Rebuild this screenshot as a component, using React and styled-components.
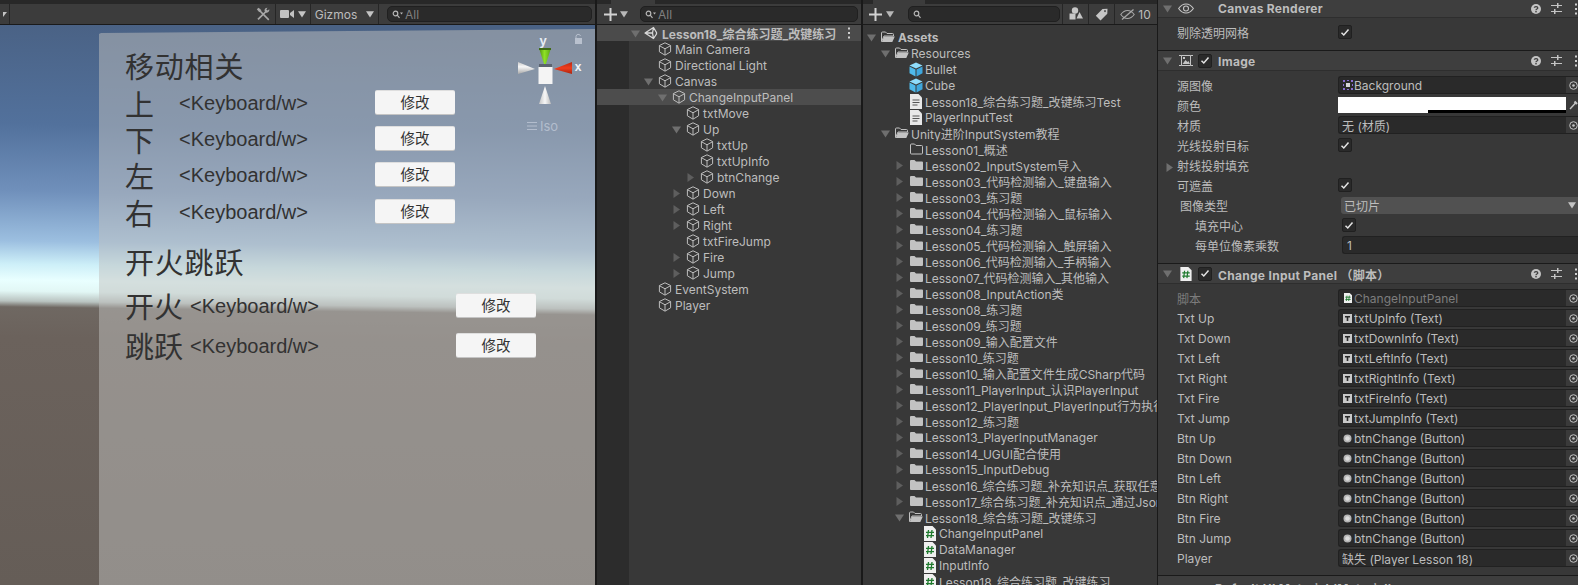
import React from 'react';
import styled, { createGlobalStyle } from 'styled-components';

const UI_FONT = `Inter, "Noto Sans CJK SC", sans-serif`;
const LINE = '#1a1a1a';
const TEXT = '#bdbdbd';

const GlobalStyle = createGlobalStyle`
	html, body {
		margin: 0;
		width: 1578px;
		height: 585px;
		overflow: hidden;
		background: #191919;
	}
`;

const Editor = styled.div`
	display: flex;
	width: 1578px;
	height: 585px;
	overflow: hidden;
	font-family: ${UI_FONT};
	font-size: 12px;
	color: ${TEXT};
	background: #191919;
`;
const Column = styled.div`
	flex: ${p => p.$flex || 'none'};
	width: ${p => p.$width}px;
	margin-left: ${p => p.$gap || 0}px;
	display: flex;
	flex-direction: column;
	overflow: hidden;
	background: #383838;
`;
const TabStrip = styled.div`
	height: 4px;
	flex: none;
	background: #282828;
	display: flex;
	padding-left: ${p => p.$tabLeft || 0}px;
`;
const ActiveTab = styled.div`
	width: ${p => p.$width}px;
	height: 4px;
	background: #3c3c3c;
`;
const Toolbar = styled.div`
	height: 20px;
	flex: none;
	display: flex;
	align-items: center;
	background: #3c3c3c;
	border-bottom: 1px solid ${LINE};
	box-sizing: content-box;
`;
const ToolCell = styled.div`
	width: ${p => p.$width}px;
	height: 100%;
	flex: none;
	display: flex;
	align-items: center;
	justify-content: center;
	gap: ${p => p.$gap || 0}px;
	border-right: ${p => (p.$plain ? 'none' : `1px solid #262626`)};
	box-sizing: border-box;
`;
const ToolSpacer = styled.div`
	flex: 1;
	height: 100%;
`;
const SearchBox = styled.div`
	height: 16px;
	width: ${p => p.$width}px;
	margin-left: ${p => p.$left}px;
	flex: none;
	display: flex;
	align-items: center;
	gap: 2px;
	padding-left: 4px;
	box-sizing: border-box;
	background: #2a2a2a;
	border: 1px solid #202020;
	border-radius: 5px;
	color: #808080;
`;

/* scene view */
const SceneView = styled.div`
	position: relative;
	flex: 1;
	display: flex;
	flex-direction: column;
	overflow: hidden;
	background: linear-gradient(180.8deg,
		#4a6285 7px, #52719c 107px, #7090bb 174px, #9cbfe0 224px, #cdeff8 247px,
		#e9ffff 263px, #e2f7f5 274px, #b9c3c0 284px, #6f6862 290px, #6b625c 320px, #655d57 100%);
`;
const UiPanel = styled.div`
	flex: 1;
	margin: 4px 0 0 99px;
	padding: 17px 0 0 26px;
	color: #323232;
	font-family: "Liberation Sans", "Noto Sans CJK SC", sans-serif;
	background: rgba(192, 192, 190, 0.5);
	clip-path: polygon(0 5px, 2px 4px, 100% 0, 100% 100%, 0 100%);
`;
const PanelTitle = styled.div`
	height: 38px;
	line-height: 38px;
	font-size: 29px;
	letter-spacing: 0.8px;
	margin-top: ${p => p.$top || 0}px;
	margin-bottom: ${p => p.$bottom || 0}px;
	font-family: "Noto Sans CJK SC", sans-serif;
`;
const BindRow = styled.div`
	display: grid;
	grid-template-columns: ${p => p.$label}px ${p => p.$key}px 80px;
	align-items: center;
	height: ${p => p.$height}px;
	margin-top: ${p => p.$top || 0}px;
`;
const BindLabel = styled.div`
	font-size: 29px;
	line-height: 1;
	font-family: "Noto Sans CJK SC", sans-serif;
	white-space: nowrap;
`;
const BindKey = styled.div`
	font-size: 20px;
	line-height: 1.15;
	margin-bottom: ${p => p.$lift}px;
	white-space: nowrap;
`;
const ChangeButton = styled.div`
	height: 23px;
	margin-bottom: ${p => p.$lift}px;
	display: flex;
	align-items: center;
	justify-content: center;
	font-size: 14.5px;
	line-height: 1;
	font-family: "Noto Sans CJK SC", sans-serif;
	color: #323232;
	background: #f5f5f5;
	border-radius: 2px;
	box-shadow: 0 1px 0 #c4c4c4, 0 -1px 0 #dedede;
`;
const GizmoLayer = styled.svg`
	position: absolute;
	left: 515px;
	top: 4px;
`;
const IsoLabel = styled.div`
	position: absolute;
	left: 527px;
	top: 93px;
	display: flex;
	align-items: center;
	gap: 3px;
	font-size: 13px;
	line-height: 16px;
	color: #b3bdcd;
`;

/* trees */
const TreeArea = styled.div`
	flex: 1;
	overflow: hidden;
	background: ${p => (p.$rail ? `linear-gradient(to right, #2c2c2c 32px, #383838 32px)` : '#383838')};
	padding-top: ${p => p.$top || 0}px;
`;
const TreeRow = styled.div`
	height: 16px;
	display: flex;
	align-items: center;
	padding-left: ${p => p.$indent}px;
	white-space: nowrap;
	overflow: hidden;
	background: ${p => (p.$selected ? '#4d4d4d' : 'transparent')};
	font-weight: ${p => (p.$bold ? 700 : 400)};
`;
const ArrowSlot = styled.div`
	width: 14px;
	flex: none;
	display: flex;
`;
const IconSlot = styled.div`
	width: ${p => p.$width || 14}px;
	height: 14px;
	flex: none;
	display: flex;
	align-items: center;
	justify-content: center;
	margin-left: ${p => p.$left || 0}px;
	margin-right: ${p => p.$gap ?? 3}px;
`;
const SceneHeader = styled.div`
	height: 16px;
	flex: none;
	display: flex;
	align-items: center;
	padding-left: 34px;
	background: #4b4b4b;
	font-weight: 700;
	white-space: nowrap;
`;
const HeaderDots = styled.div`
	margin-left: auto;
	padding-right: 10px;
	display: flex;
`;

/* inspector */
const CompHeader = styled.div`
	height: ${p => p.$height || 19}px;
	flex: none;
	display: flex;
	align-items: center;
	padding-left: 5px;
	background: #3e3e3e;
	border-top: ${p => (p.$first ? 'none' : `1px solid ${LINE}`)};
	border-bottom: 1px solid #2e2e2e;
	font-weight: 700;
	white-space: nowrap;
	box-sizing: content-box;
`;
const CompTitle = styled.span`
	margin-left: ${p => p.$left}px;
	margin-top: ${p => (p.$drop ? 2 : 0)}px;
	letter-spacing: 0.3px;
`;
const CompActions = styled.div`
	margin-left: auto;
	display: flex;
	align-items: center;
`;
const ActionSlot = styled.div`
	width: ${p => p.$width || 20}px;
	display: flex;
	justify-content: ${p => (p.$end ? 'flex-end' : 'center')};
`;
const CompBody = styled.div`
	padding: 4px 0 ${p => p.$bottom}px 0;
	flex: none;
`;
const PropRow = styled.div`
	position: relative;
	height: 20px;
	display: flex;
	align-items: center;
	padding-left: ${p => p.$indent || 19}px;
	white-space: nowrap;
	color: ${p => (p.$dim ? '#7d7d7d' : TEXT)};
`;
const PropLabel = styled.div`
	width: ${p => p.$width || 161}px;
	flex: none;
`;
const FoldArrow = styled.div`
	position: absolute;
	left: 7px;
	top: 5px;
`;
const Field = styled.div`
	flex: 1;
	height: 18px;
	display: flex;
	align-items: center;
	box-sizing: border-box;
	padding-left: 3px;
	background: #2a2a2a;
	border: 1px solid #212121;
	border-right: none;
	border-radius: 3px 0 0 3px;
	overflow: hidden;
	color: ${p => (p.$dim ? '#7d7d7d' : TEXT)};
`;
const FieldIcon = styled.div`
	width: 11px;
	height: 11px;
	flex: none;
	margin-right: 1px;
	display: flex;
	align-items: center;
	justify-content: center;
`;
const FieldText = styled.span`
	flex: 1;
	overflow: hidden;
`;
const PickButton = styled.div`
	width: 12px;
	height: 16px;
	flex: none;
	display: flex;
	align-items: center;
	padding-left: 3px;
	box-sizing: border-box;
	background: #3a3a3a;
`;
const ColorBar = styled.div`
	flex: 1;
	height: 16px;
	display: flex;
	align-items: flex-end;
	padding-left: 90px;
	background: #fff;
`;
const ColorAlpha = styled.div`
	flex: 1;
	height: 3px;
	background: #000;
`;
const CheckBox = styled.div`
	width: 14px;
	height: 14px;
	flex: none;
	display: flex;
	align-items: center;
	justify-content: center;
	box-sizing: border-box;
	background: #2a2a2a;
	border: 1px solid #202020;
	border-radius: 2px;
	margin-left: ${p => p.$left || 0}px;
`;
const DropDown = styled.div`
	flex: 1;
	height: 17px;
	display: flex;
	align-items: center;
	justify-content: space-between;
	padding: 0 2px 0 3px;
	background: #515151;
	border-radius: 3px 0 0 3px;
`;
const NumberField = styled.div`
	flex: 1;
	height: 18px;
	display: flex;
	align-items: center;
	padding-left: 4px;
	box-sizing: border-box;
	background: #2a2a2a;
	border: 1px solid #212121;
	border-right: none;
	border-radius: 3px 0 0 3px;
`;

/* icons */
const Down = ({ size = 9, color = '#6f6f6f' }) => (
	<svg width={size} height={size} viewBox="0 0 9 9"><path d="M0 1.5h9L4.5 8.5z" fill={color} /></svg>
);
const Right = ({ color = '#5e5e5e' }) => (
	<svg width="9" height="9" viewBox="0 0 9 9"><path d="M1.5 0v9l6.5-4.500z" fill={color} /></svg>
);
const Cube = () => (
	<svg width="14" height="14" viewBox="0 0 14 14" fill="none" stroke="#bdbdbd" strokeWidth="1" strokeLinejoin="round">
		<path d="M7 .8 12.6 3.500 V9.800 L7 13.200 1.400 9.800 V3.500z M1.400 3.700 7 6.800 12.600 3.700 M7 6.800 V13" />
	</svg>
);
const BlueCube = () => (
	<svg width="14" height="15" viewBox="0 0 14 15">
		<path d="M7 .5 13.500 3.500 7 6.500 .5 3.500z" fill="#8fdcfb" />
		<path d="M.5 4.500 6.500 7.500 V14.500 L.5 11.300z" fill="#4fb9ea" />
		<path d="M13.500 4.500 7.500 7.500 V14.500 L13.500 11.300z" fill="#3ea6dc" />
	</svg>
);
const Folder = () => (
	<svg width="13" height="12" viewBox="0 0 13 12">
		<path d="M0 2a1 1 0 0 1 1-1h3.500l1.500 1.500h6a1 1 0 0 1 1 1V10a1 1 0 0 1-1 1H1a1 1 0 0 1-1-1z" fill="#c2c2c2" />
	</svg>
);
const FolderOpen = () => (
	<svg width="14" height="12" viewBox="0 0 14 12">
		<path d="M.5 2a1 1 0 0 1 1-1h3l1.500 1.500h5.500a1 1 0 0 1 1 1V5H3L.5 10.500z" fill="none" stroke="#c2c2c2" />
		<path d="M3 5.500h10.800L11.300 11H.8z" fill="#c2c2c2" />
	</svg>
);
const FolderEmpty = () => (
	<svg width="13" height="12" viewBox="0 0 13 12">
		<path d="M.5 2a1 1 0 0 1 1-1h3l1.500 1.500h5.500a1 1 0 0 1 1 1V10a1 1 0 0 1-1 1h-10a1 1 0 0 1-1-1z" fill="none" stroke="#c2c2c2" />
	</svg>
);
const DocIcon = () => (
	<svg width="12" height="15" viewBox="0 0 12 15">
		<path d="M0 0h8.500L12 3.500V15H0z" fill="#e8e8e8" />
		<path d="M2.500 6h7M2.500 8.500h7M2.500 11h5" stroke="#555" strokeWidth="1" />
	</svg>
);
const ScriptIcon = ({ width = 12, height = 15 }) => (
	<svg width={width} height={height} viewBox="0 0 12 15">
		<path d="M0 0h8.500L12 3.500V15H0z" fill="#efefef" />
		<path d="M4.500 4 3.500 12M8 4 7 12M2 6.300h8M2 9.700h8" stroke="#1f7a2e" strokeWidth="1.300" />
	</svg>
);
const UnityMark = () => (
	<svg width="14" height="14" viewBox="0 0 14 14" fill="none" stroke="#d8d8d8" strokeWidth="1.300" strokeLinejoin="round">
		<path d="M1 7 9.500 1.500 12.500 6.500 12.500 8 9.500 12.500z M1 7H8.500L9.500 1.500M8.500 7 9.500 12.500" />
	</svg>
);
const VDots = ({ color = '#cfcfcf' }) => (
	<svg width="4" height="12" viewBox="0 0 4 12" fill={color}><rect x="1" y="0.500" width="2" height="2" /><rect x="1" y="5" width="2" height="2" /><rect x="1" y="9.500" width="2" height="2" /></svg>
);
const Lens = ({ arrow = true }) => (
	<svg width="11" height="9" viewBox="0 0 11 9" fill="none" stroke="#b8b8b8" strokeWidth="1.200">
		<circle cx="3.500" cy="3.500" r="2.300" />
		<path d="M5.200 5.200 7.500 7.800" />
		{arrow && <path d="M8 2.500h3L9.500 4.500z" fill="#b8b8b8" stroke="none" />}
	</svg>
);
const Plus = () => (
	<svg width="13" height="13" viewBox="0 0 13 13"><path d="M5.500 0h2v5.500H13v2H7.500V13h-2V7.500H0v-2h5.500z" fill="#d2d2d2" /></svg>
);
const Tools = () => (
	<svg width="14" height="14" viewBox="0 0 14 14" fill="none" stroke="#a8a8a8" strokeWidth="1.700">
		<path d="M3.500 3.500 12.800 12.800" />
		<path d="M10.500 4 2 12.300" />
		<path d="M.8 2.300 2.600.8 5.500 3.300 3.300 5.300z" fill="#a8a8a8" stroke="none" />
		<path d="M13.300 2.200a2.900 2.900 0 0 1-3.900 3.300L8.500 3.700A2.900 2.900 0 0 1 11.500.8L10.300 2.600l1.200 1z" fill="#a8a8a8" stroke="none" />
	</svg>
);
const Camera = () => (
	<svg width="14" height="10" viewBox="0 0 14 10" fill="#c2c2c2"><rect x="0" y="1" width="9" height="8" rx="1" /><path d="M10 4 14 1v8l-4-3z" /></svg>
);
const Shapes = () => (
	<svg width="14" height="14" viewBox="0 0 14 14" fill="#c6c6c6">
		<circle cx="6" cy="3.500" r="3.200" />
		<rect x="0.500" y="6.500" width="6" height="6" />
		<path d="M10.500 5 14 11.500H7.500z" />
	</svg>
);
const Tag = () => (
	<svg width="13" height="13" viewBox="0 0 13 13" fill="#c6c6c6">
		<path d="M7.500 1 12.500 .8 12.300 5.800 5.500 12.500 .8 7.800zM10 2.200a.9.900 0 1 0 .01 0z" fillRule="evenodd" />
	</svg>
);
const EyeOff = () => (
	<svg width="15" height="11" viewBox="0 0 15 11" fill="none" stroke="#a8a8a8" strokeWidth="1.100">
		<path d="M.8 5.500C3 2.500 5 1.500 7.500 1.500S12 2.500 14.200 5.500C12 8.500 10 9.500 7.500 9.500S3 8.500 .8 5.500z" />
		<path d="M2 10.500 13.500.5" strokeWidth="1.300" />
	</svg>
);
const Eye = () => (
	<svg width="16" height="11" viewBox="0 0 16 11" fill="none" stroke="#c4c4c4" strokeWidth="1.100">
		<path d="M.6 5.500C3 2 5.300 1 8 1s5 1 7.400 4.500C13 9 10.700 10 8 10S3 9 .6 5.500z" />
		<circle cx="8" cy="5.500" r="2.500" />
	</svg>
);
const ImageGlyph = () => (
	<svg width="14" height="13" viewBox="0 0 14 13" fill="none" stroke="#c4c4c4">
		<path d="M2.500 1.500h9v10h-9zM0 1.500h2.500M11.500 1.500H14M0 11.500h2.500M11.500 11.500H14" />
		<path d="M3.500 10 6.500 6l2 2 1-1 1.500 3z" fill="#c4c4c4" stroke="none" />
		<rect x="4" y="3" width="2" height="2" fill="#c4c4c4" stroke="none" />
	</svg>
);
const Help = () => (
	<svg width="10" height="10" viewBox="0 0 10 10">
		<circle cx="5" cy="5" r="5" fill="#c4c4c4" />
		<path d="M3.300 3.800C3.400 2.300 6.800 2.300 6.800 4C6.800 5 5 5 5 6.200" fill="none" stroke="#3e3e3e" strokeWidth="1.300" />
		<rect x="4.300" y="7" width="1.400" height="1.400" fill="#3e3e3e" />
	</svg>
);
const Sliders = () => (
	<svg width="11" height="11" viewBox="0 0 11 11" fill="#c4c4c4">
		<rect y="2" width="11" height="1" /><rect x="6" y="0" width="1.500" height="5" />
		<rect y="8" width="11" height="1" /><rect x="3" y="6" width="1.500" height="5" />
	</svg>
);
const Check = () => (
	<svg width="10" height="9" viewBox="0 0 10 9" fill="none" stroke="#e4e4e4" strokeWidth="1.500"><path d="M1.500 4.800 3.800 7 8.500 1.500" /></svg>
);
const Target = () => (
	<svg width="9" height="9" viewBox="0 0 9 9" fill="none" stroke="#c4c4c4"><circle cx="4.500" cy="4.500" r="3.800" /><circle cx="4.500" cy="4.500" r="1.300" fill="#c4c4c4" stroke="none" /></svg>
);
const Dropper = () => (
	<svg width="9" height="10" viewBox="0 0 9 10" fill="none" stroke="#c4c4c4" strokeWidth="1.400"><path d="M1 9 6.500 3" /><path d="M5.500 1.500 8 4" strokeWidth="2.200" /></svg>
);
const SpriteDots = () => (
	<svg width="10" height="10" viewBox="0 0 10 10">
		<path d="M0 0h2v2H0zM4 0h2v1H4zM8 0h2v2H8zM0 4h1v2H0zM9 4h1v2H9zM0 8h2v2H0zM4 9h2v1H4zM8 8h2v2H8z" fill="#8a6fd0" />
		<rect x="3" y="3" width="4" height="4" fill="#d5d5d5" />
	</svg>
);
const TextGlyph = () => (
	<svg width="9" height="9" viewBox="0 0 9 9"><path d="M0 0h9v9H0z M2 2v1.500h1.700V7h1.600V3.500H7V2z" fill="#c8c8c8" fillRule="evenodd" /></svg>
);
const ButtonGlyph = () => (
	<svg width="9" height="9" viewBox="0 0 9 9"><circle cx="4.500" cy="4.500" r="4" fill="#b4b4b4" /><circle cx="4.500" cy="4.500" r="2.300" fill="#dcdcdc" /></svg>
);

const Gizmo = () => (
	<GizmoLayer width="75" height="80" viewBox="0 0 75 80">
		<defs>
			<linearGradient id="coneLeft" x1="0" y1="0" x2="0" y2="1"><stop offset="0" stopColor="#c9c9c9" /><stop offset="0.4" stopColor="#f7f7f7" /><stop offset="1" stopColor="#a8a8a8" /></linearGradient>
			<linearGradient id="coneDown" x1="0" y1="0" x2="1" y2="0"><stop offset="0" stopColor="#c4c4c4" /><stop offset="0.5" stopColor="#f7f7f7" /><stop offset="1" stopColor="#bcbcbc" /></linearGradient>
			<linearGradient id="coneGreen" x1="0" y1="0" x2="1" y2="0"><stop offset="0" stopColor="#4e8f12" /><stop offset="0.45" stopColor="#8fe226" /><stop offset="1" stopColor="#5aa316" /></linearGradient>
			<linearGradient id="coneRed" x1="0" y1="0" x2="0" y2="1"><stop offset="0" stopColor="#b82a12" /><stop offset="0.5" stopColor="#f03c1c" /><stop offset="1" stopColor="#a82610" /></linearGradient>
		</defs>
		<path d="M24 19H36L30 38z" fill="url(#coneGreen)" />
		<path d="M24 19H36V21H24z" fill="#3f6b14" />
		<path d="M57 33V45L39 40z" fill="url(#coneRed)" />
		<path d="M3 33V45L20 40z" fill="url(#coneLeft)" />
		<path d="M24 75H36L30 57z" fill="url(#coneDown)" />
		<rect x="24" y="35" width="13" height="4" fill="#5c6470" />
		<rect x="23.500" y="38" width="14" height="17" fill="#f4f4f4" />
		<text x="28" y="16" fontFamily="Liberation Sans, sans-serif" fontWeight="700" fontSize="13" fill="#e8edf5" textAnchor="middle">y</text>
		<text x="63" y="42" fontFamily="Liberation Sans, sans-serif" fontWeight="700" fontSize="12" fill="#f2f4f8" textAnchor="middle">x</text>
		<path d="M60 9h7v6h-7z" fill="#b9c1ce" />
		<path d="M61 9V7.500a2.300 2.300 0 0 1 4.500-.5" fill="none" stroke="#b9c1ce" strokeWidth="1" />
	</GizmoLayer>
);
const IsoLines = () => (
	<svg width="10" height="8" viewBox="0 0 10 8" stroke="#b3bdcd"><path d="M0 .5h10M0 4h10M0 7.500h10" /></svg>
);

const HIERARCHY = [
	{ name: 'Main Camera', depth: 0 },
	{ name: 'Directional Light', depth: 0 },
	{ name: 'Canvas', depth: 0, fold: 'open' },
	{ name: 'ChangeInputPanel', depth: 1, fold: 'open', selected: true },
	{ name: 'txtMove', depth: 2 },
	{ name: 'Up', depth: 2, fold: 'open' },
	{ name: 'txtUp', depth: 3 },
	{ name: 'txtUpInfo', depth: 3 },
	{ name: 'btnChange', depth: 3, fold: 'closed' },
	{ name: 'Down', depth: 2, fold: 'closed' },
	{ name: 'Left', depth: 2, fold: 'closed' },
	{ name: 'Right', depth: 2, fold: 'closed' },
	{ name: 'txtFireJump', depth: 2 },
	{ name: 'Fire', depth: 2, fold: 'closed' },
	{ name: 'Jump', depth: 2, fold: 'closed' },
	{ name: 'EventSystem', depth: 0 },
	{ name: 'Player', depth: 0 },
];

const LESSONS = [
	'Lesson02_InputSystem导入',
	'Lesson03_代码检测输入_键盘输入',
	'Lesson03_练习题',
	'Lesson04_代码检测输入_鼠标输入',
	'Lesson04_练习题',
	'Lesson05_代码检测输入_触屏输入',
	'Lesson06_代码检测输入_手柄输入',
	'Lesson07_代码检测输入_其他输入',
	'Lesson08_InputAction类',
	'Lesson08_练习题',
	'Lesson09_练习题',
	'Lesson09_输入配置文件',
	'Lesson10_练习题',
	'Lesson10_输入配置文件生成CSharp代码',
	'Lesson11_PlayerInput_认识PlayerInput',
	'Lesson12_PlayerInput_PlayerInput行为执行',
	'Lesson12_练习题',
	'Lesson13_PlayerInputManager',
	'Lesson14_UGUI配合使用',
	'Lesson15_InputDebug',
	'Lesson16_综合练习题_补充知识点_获取任意键',
	'Lesson17_综合练习题_补充知识点_通过Json',
];

const PROJECT = [
	{ name: 'Assets', depth: 0, fold: 'open', icon: 'open', bold: true },
	{ name: 'Resources', depth: 1, fold: 'open', icon: 'open' },
	{ name: 'Bullet', depth: 2, icon: 'prefab' },
	{ name: 'Cube', depth: 2, icon: 'prefab' },
	{ name: 'Lesson18_综合练习题_改键练习Test', depth: 2, icon: 'doc' },
	{ name: 'PlayerInputTest', depth: 2, icon: 'doc' },
	{ name: 'Unity进阶InputSystem教程', depth: 1, fold: 'open', icon: 'open' },
	{ name: 'Lesson01_概述', depth: 2, icon: 'empty' },
	...LESSONS.map(name => ({ name, depth: 2, fold: 'closed', icon: 'folder' })),
	{ name: 'Lesson18_综合练习题_改键练习', depth: 2, fold: 'open', icon: 'open' },
	{ name: 'ChangeInputPanel', depth: 3, icon: 'script' },
	{ name: 'DataManager', depth: 3, icon: 'script' },
	{ name: 'InputInfo', depth: 3, icon: 'script' },
	{ name: 'Lesson18_综合练习题_改键练习', depth: 3, icon: 'script' },
];

const PROJECT_ICONS = {
	open: <FolderOpen />,
	folder: <Folder />,
	empty: <FolderEmpty />,
	prefab: <BlueCube />,
	doc: <DocIcon />,
	script: <ScriptIcon />,
};

const TEXT_REFS = [
	['Txt Up', 'txtUpInfo (Text)'],
	['Txt Down', 'txtDownInfo (Text)'],
	['Txt Left', 'txtLeftInfo (Text)'],
	['Txt Right', 'txtRightInfo (Text)'],
	['Txt Fire', 'txtFireInfo (Text)'],
	['Txt Jump', 'txtJumpInfo (Text)'],
];
const BUTTON_REFS = ['Btn Up', 'Btn Down', 'Btn Left', 'Btn Right', 'Btn Fire', 'Btn Jump'];

const Fold = ({ fold }) => (
	<ArrowSlot>{fold === 'open' ? <Down /> : fold === 'closed' ? <Right /> : null}</ArrowSlot>
);

const HeaderActions = () => (
	<CompActions>
		<ActionSlot><Help /></ActionSlot>
		<ActionSlot><Sliders /></ActionSlot>
		<ActionSlot $width={12} $end><VDots /></ActionSlot>
	</CompActions>
);

const ObjectField = ({ icon, dim, children }) => (
	<Field $dim={dim}>
		{icon && <FieldIcon>{icon}</FieldIcon>}
		<FieldText>{children}</FieldText>
		<PickButton><Target /></PickButton>
	</Field>
);

const Binding = ({ label, labelWidth, keyWidth, height, top, keyLift, lift }) => (
	<BindRow $label={labelWidth} $key={keyWidth} $height={height} $top={top}>
		<BindLabel>{label}</BindLabel>
		<BindKey $lift={keyLift}>{'<Keyboard/w>'}</BindKey>
		<ChangeButton $lift={lift}>修改</ChangeButton>
	</BindRow>
);

export default function App() {
	return (
		<Editor>
			<GlobalStyle />

			<Column $width={595}>
				<TabStrip />
				<Toolbar>
					<ToolCell $width={10}><svg width="4" height="8" viewBox="0 0 4 8"><path d="M0 2h4L0 7z" fill="#c4c4c4" /></svg></ToolCell>
					<ToolSpacer />
					<ToolCell $width={26}><Tools /></ToolCell>
					<ToolCell $width={35} $gap={4}><Camera /><Down size={8} color="#c4c4c4" /></ToolCell>
					<ToolCell $width={50} $plain>Gizmos</ToolCell>
					<ToolCell $width={18}><Down size={8} color="#c4c4c4" /></ToolCell>
					<SearchBox $width={205} $left={8}><Lens /><span>All</span></SearchBox>
					<ToolCell $width={3} $plain />
				</Toolbar>
				<SceneView>
					<UiPanel>
						<PanelTitle $bottom={1}>移动相关</PanelTitle>
						{['上', '下', '左', '右'].map(label => (
							<Binding key={label} label={label} labelWidth={54} keyWidth={196} height={36.3} keyLift={0} lift={2} />
						))}
						<PanelTitle $top={12}>开火跳跃</PanelTitle>
						<Binding label="开火" labelWidth={65} keyWidth={266} height={40} top={5.7} keyLift={-1} lift={1} />
						<Binding label="跳跃" labelWidth={65} keyWidth={266} height={40} keyLift={-1} lift={1} />
					</UiPanel>
					<Gizmo />
					<IsoLabel><IsoLines />Iso</IsoLabel>
				</SceneView>
			</Column>

			<Column $width={264} $gap={2}>
				<TabStrip $tabLeft={14}><ActiveTab $width={44} /></TabStrip>
				<Toolbar>
					<ToolCell $width={7} $plain />
					<Plus />
					<ToolCell $width={14} $plain><Down size={8} color="#b8b8b8" /></ToolCell>
					<SearchBox $width={218} $left={9}><Lens /><span>All</span></SearchBox>
				</Toolbar>
				<SceneHeader>
					<Down />
					<IconSlot $left={4} $gap={4}><UnityMark /></IconSlot>
					<span>Lesson18_综合练习题_改键练习</span>
					<HeaderDots><VDots /></HeaderDots>
				</SceneHeader>
				<TreeArea $rail>
					{HIERARCHY.map(item => (
						<TreeRow key={item.name} $indent={47 + item.depth * 14} $selected={item.selected}>
							<Fold fold={item.fold} />
							<IconSlot><Cube /></IconSlot>
							{item.name}
						</TreeRow>
					))}
				</TreeArea>
			</Column>

			<Column $width={294} $gap={2}>
				<TabStrip $tabLeft={10}><ActiveTab $width={52} /></TabStrip>
				<Toolbar>
					<ToolCell $width={6} $plain />
					<Plus />
					<ToolCell $width={15} $plain><Down size={8} color="#b8b8b8" /></ToolCell>
					<SearchBox $width={152} $left={11}><Lens arrow={false} /></SearchBox>
					<ToolCell $width={3} />
					<ToolCell $width={26}><Shapes /></ToolCell>
					<ToolCell $width={26}><Tag /></ToolCell>
					<ToolCell $width={41} $gap={3} $plain><EyeOff /><span>10</span></ToolCell>
				</Toolbar>
				<TreeArea $top={4}>
					{PROJECT.map((item, i) => (
						<TreeRow key={i} $indent={4 + item.depth * 14} $bold={item.bold}>
							<Fold fold={item.fold} />
							<IconSlot $gap={item.bold ? 3 : 2}>{PROJECT_ICONS[item.icon]}</IconSlot>
							{item.name}
						</TreeRow>
					))}
				</TreeArea>
			</Column>

			<Column $width={420} $gap={1}>
				<CompHeader $first $height={17}>
					<Down /><IconSlot $width={16} $left={6} $gap={0}><Eye /></IconSlot>
					<CompTitle $left={24}>Canvas Renderer</CompTitle>
					<HeaderActions />
				</CompHeader>
				<CompBody $bottom={8}>
					<PropRow>
						<PropLabel>剔除透明网格</PropLabel>
						<CheckBox><Check /></CheckBox>
					</PropRow>
				</CompBody>

				<CompHeader>
					<Down /><IconSlot $left={7} $gap={0}><ImageGlyph /></IconSlot>
					<CheckBox $left={5}><Check /></CheckBox>
					<CompTitle $left={6} $drop>Image</CompTitle>
					<HeaderActions />
				</CompHeader>
				<CompBody $bottom={8}>
					<PropRow>
						<PropLabel>源图像</PropLabel>
						<ObjectField icon={<SpriteDots />}>Background</ObjectField>
					</PropRow>
					<PropRow>
						<PropLabel>颜色</PropLabel>
						<ColorBar><ColorAlpha /></ColorBar>
						<PickButton><Dropper /></PickButton>
					</PropRow>
					<PropRow>
						<PropLabel>材质</PropLabel>
						<ObjectField>无 (材质)</ObjectField>
					</PropRow>
					<PropRow>
						<PropLabel>光线投射目标</PropLabel>
						<CheckBox><Check /></CheckBox>
					</PropRow>
					<PropRow>
						<FoldArrow><Right color="#6f6f6f" /></FoldArrow>
						<PropLabel>射线投射填充</PropLabel>
					</PropRow>
					<PropRow>
						<PropLabel>可遮盖</PropLabel>
						<CheckBox><Check /></CheckBox>
					</PropRow>
					<PropRow $indent={22}>
						<PropLabel>图像类型</PropLabel>
						<DropDown>已切片<Down size={8} color="#c4c4c4" /></DropDown>
					</PropRow>
					<PropRow $indent={37}>
						<PropLabel $width={147}>填充中心</PropLabel>
						<CheckBox><Check /></CheckBox>
					</PropRow>
					<PropRow $indent={37}>
						<PropLabel $width={147}>每单位像素乘数</PropLabel>
						<NumberField>1</NumberField>
					</PropRow>
				</CompBody>

				<CompHeader>
					<Down /><IconSlot $left={7} $gap={0}><ScriptIcon width={12} height={14} /></IconSlot>
					<CheckBox $left={5}><Check /></CheckBox>
					<CompTitle $left={6} $drop>Change Input Panel （脚本）</CompTitle>
					<HeaderActions />
				</CompHeader>
				<CompBody $bottom={7}>
					<PropRow $dim>
						<PropLabel>脚本</PropLabel>
						<ObjectField dim icon={<ScriptIcon width={8} height={10} />}>ChangeInputPanel</ObjectField>
					</PropRow>
					{TEXT_REFS.map(([label, value]) => (
						<PropRow key={label}>
							<PropLabel>{label}</PropLabel>
							<ObjectField icon={<TextGlyph />}>{value}</ObjectField>
						</PropRow>
					))}
					{BUTTON_REFS.map(label => (
						<PropRow key={label}>
							<PropLabel>{label}</PropLabel>
							<ObjectField icon={<ButtonGlyph />}>btnChange (Button)</ObjectField>
						</PropRow>
					))}
					<PropRow>
						<PropLabel>Player</PropLabel>
						<ObjectField>缺失 (Player Lesson 18)</ObjectField>
					</PropRow>
				</CompBody>

				<CompHeader $height={22}>
					<CompTitle $left={52} $drop>Default UI Material (Material)</CompTitle>
				</CompHeader>
			</Column>
		</Editor>
	);
}
